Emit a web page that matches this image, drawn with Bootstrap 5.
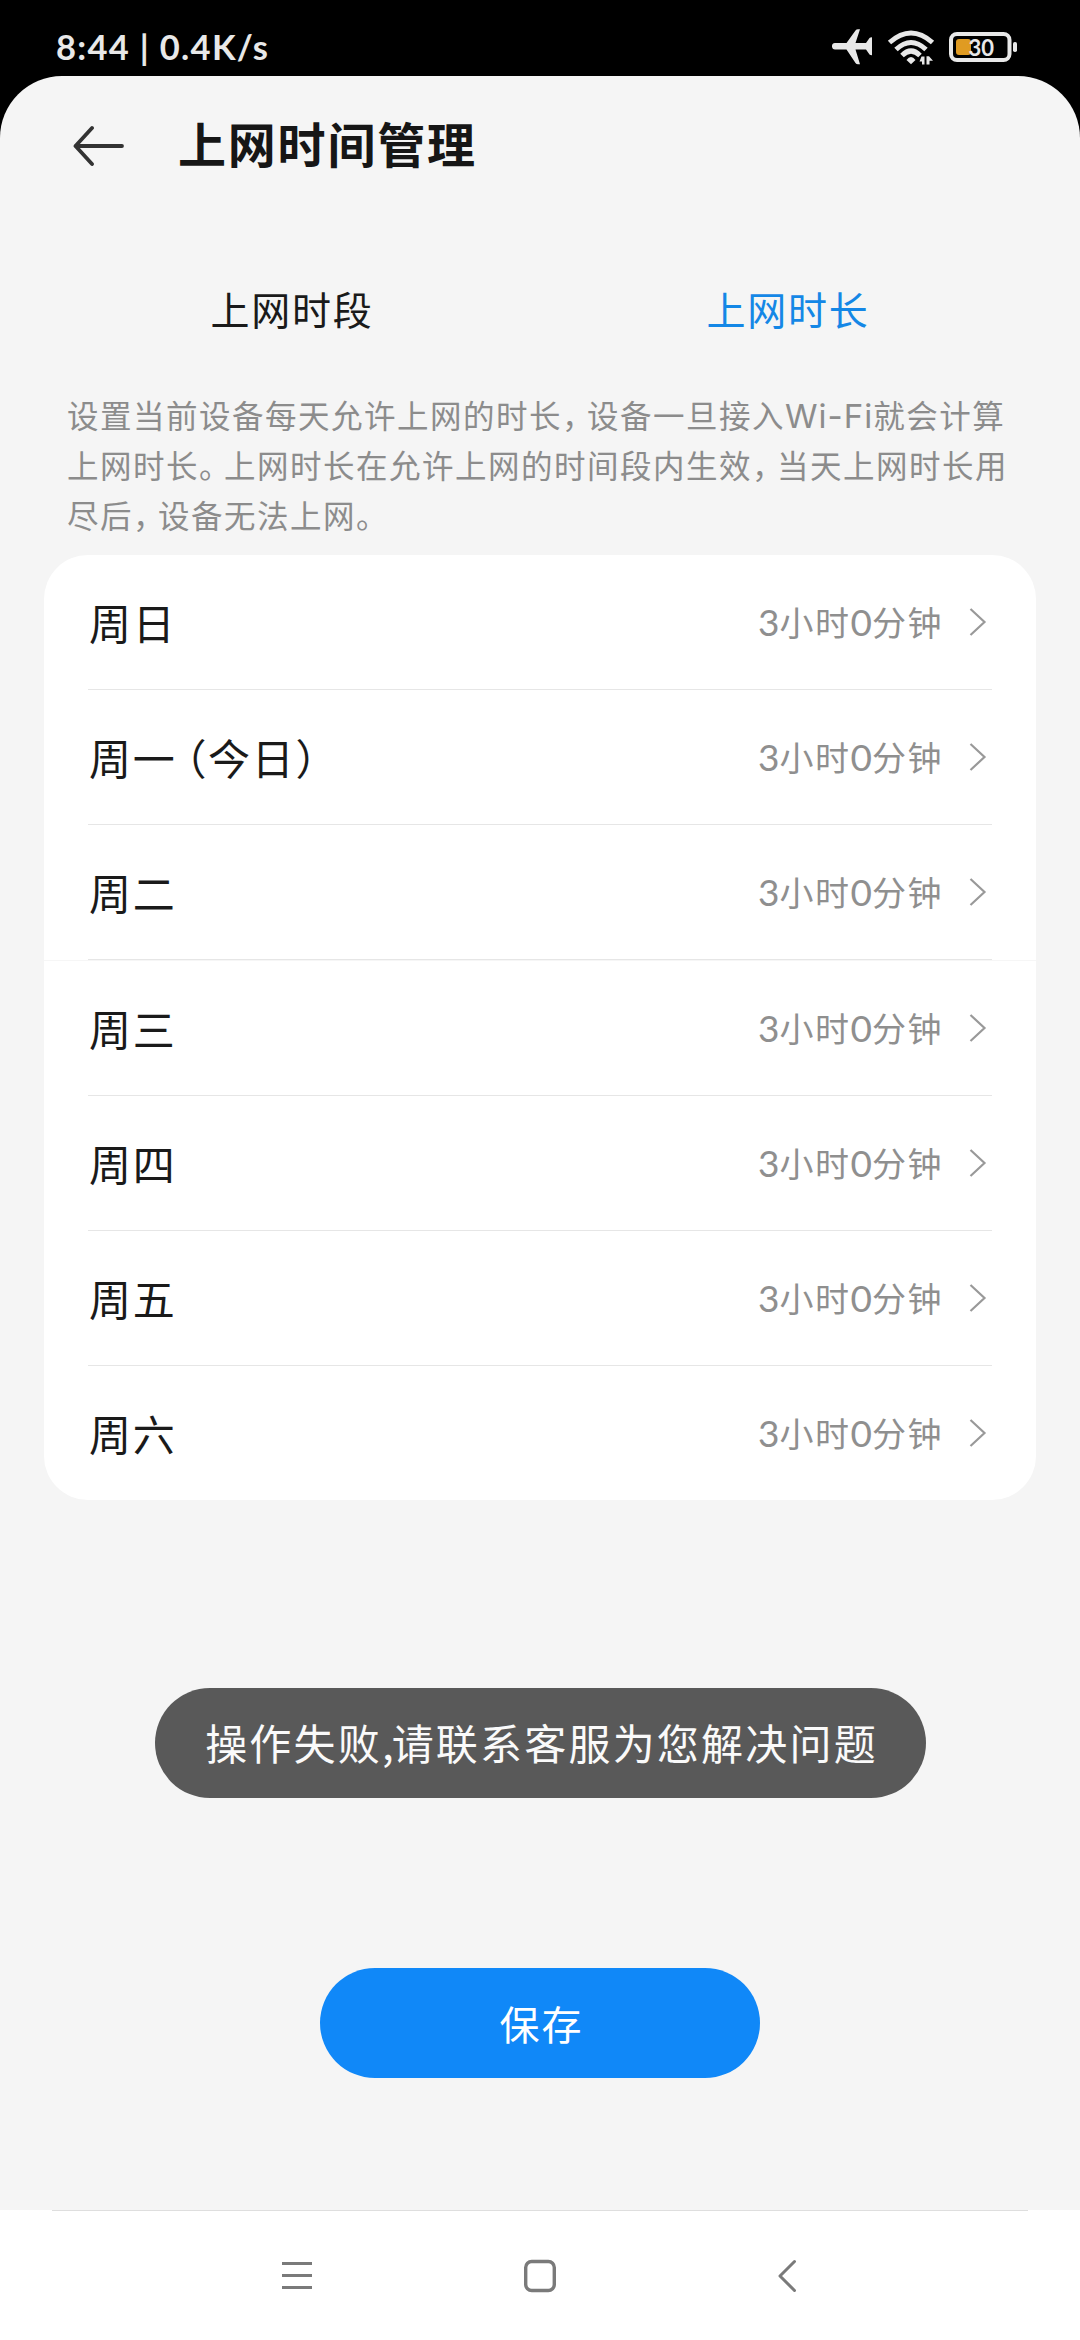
<!DOCTYPE html>
<html lang="zh-CN">
<head>
<meta charset="utf-8">
<meta name="viewport" content="width=device-width, initial-scale=1">
<title>上网时间管理</title>
<link href="https://cdn.jsdelivr.net/npm/bootstrap@5.3.0/dist/css/bootstrap.min.css" rel="stylesheet">
<style>
  body { font-family: "Noto Sans CJK SC", "Noto Sans", sans-serif; background: #000; color: #1a1a1a; line-height: 1; }
  svg { display: block; flex: none; }
  .screen { width: 1080px; height: 2340px; }
  .statusbar { height: 76px; padding: 18px 60px 0 56px; color: #e8e8e8; }
  .clock { font-family: Lato, sans-serif; font-weight: 700; font-size: 34.5px; line-height: 58px; letter-spacing: 1.3px; }
  .sheet { height: 2134px; background: #f5f5f5; border-radius: 62px 62px 0 0; }
  .topbar { height: 140px; padding-left: 73px; gap: 53px; }
  .page-title { font-size: 48px; font-weight: 700; letter-spacing: 1.8px; color: #161616; padding-bottom: 6px; }
  .tabs-row { height: 108px; margin: 40px 44px 0; }
  .tabs-row .nav-link { font-size: 39px; letter-spacing: 1.7px; color: #1a1a1a; line-height: 104px; }
  .tabs-row .nav-link.active { color: #1487e6; }
  .hint { margin: 25px 0 0 67px; height: 166px; font-size: 31.5px; line-height: 50px; letter-spacing: 1.5px; color: #8c8c8c; }
  .pn { letter-spacing: -6.5px; }
  .latin { font-family: Inter, sans-serif; font-size: 33px; letter-spacing: 1px; line-height: 1; }
  .days { margin: 0 44px; height: 945px; border-radius: 44px; background: #fff; }
  .day { height: 135px; margin: 0 44px; border-bottom: 1px solid #e6e6e6; }
  .day-last { height: 134px; border-bottom: 0; }
  .seam { height: 1px; background: #f6f6f6; }
  .day-name { font-size: 42px; letter-spacing: 1.7px; padding-left: 1px; }
  .pl { margin-left: 9px; font-feature-settings: "halt"; }
  .day-value { font-size: 34px; letter-spacing: 1.5px; color: #8f8f8f; margin-right: 26px; padding-bottom: 2px; }
  .num { font-family: Lato, sans-serif; font-size: 37px; letter-spacing: 0; }
  .day svg { margin-right: 5px; }
  .toast-pill { margin: 188px auto 0; width: 771px; height: 110px; background: #595959; color: #fafafa; font-size: 42px; letter-spacing: 2.2px; padding: 0 0 3px 3px; }
  .comma { letter-spacing: -2px; }
  .save-btn { margin: 170px auto 0; width: 440px; height: 110px; background: #1088f8; color: #fff; font-size: 40px; letter-spacing: 2px; line-height: 1; padding: 0 0 1px 3px; }
  .sysnav { height: 130px; background: #fff; }
  .hairline { height: 1px; margin: 0 52px; background: #dedede; }
  .keys { height: 129px; padding: 0 283px 0 282px; }
  .keys svg:nth-child(2) { margin-right: 10px; }
</style>
</head>
<body>
<div class="screen d-flex flex-column">
  <div class="statusbar d-flex justify-content-between">
    <div class="clock">8:44 | 0.4K/s</div>
    <svg width="190" height="50" viewBox="830 18 190 50" fill="#e8e8e8">
      <path d="M835 43H846.500L855.500 30.500Q856.300 29.300 858 29.300H860L855.500 43H866L869.500 38Q870 37.300 872 37.300V55.200Q870 55.200 869.500 54.500L866 49.500H855.500L860 64.300H858Q856.300 64.300 855.500 63L846.500 49.500H835.500A3.200 3.200 0 0 1 835 43Z"/>
      <g fill="none" stroke="#e8e8e8" stroke-width="5">
        <path d="M889.500 42.500Q911 23.500 932.500 42.500"/>
        <path d="M896 49.500Q911 35.500 926 49.500"/>
        <path d="M902 55.500Q911 46.500 920 55.500"/>
      </g>
      <path d="M906.500 60Q911 54 915.500 60L911 64.200Z"/>
      <path d="M921.500 56.500H924.500V64.500H922V61.500H919.500ZM926.500 56.200H929L933 60.800H929.500V64.500H926.500Z"/>
      <rect x="951" y="34" width="58.500" height="26" rx="6" fill="none" stroke="#e8e8e8" stroke-width="4"/>
      <rect x="956" y="39" width="15" height="16" rx="3" fill="#e09b22"/>
      <rect x="1013" y="42" width="4" height="10" rx="1.800"/>
      <text x="968.500" y="55.600" font-family="Lato, sans-serif" font-size="22" font-weight="700" textLength="25.500">30</text>
    </svg>
  </div>

  <main class="sheet d-flex flex-column">
    <header class="topbar d-flex align-items-center">
      <svg width="52" height="44" viewBox="0 0 52 44" fill="none" stroke="#333" stroke-width="3.800" stroke-linecap="round" stroke-linejoin="round">
        <path d="M49 22H2.500M19 4L2.500 22L19 40"/>
      </svg>
      <h1 class="page-title mb-0">上网时间管理</h1>
    </header>

    <nav class="tabs-row nav nav-fill row g-0">
      <a class="nav-link col-6 p-0 text-center">上网时段</a>
      <a class="nav-link active col-6 p-0 text-center">上网时长</a>
    </nav>

    <p class="hint text-nowrap">设置当前设备每天允许上网的时长<span class="pn">，</span>设备一旦接入<span class="latin">Wi-Fi</span>就会计算<br>上网时长<span class="pn">。</span>上网时长在允许上网的时间段内生效<span class="pn">，</span>当天上网时长用<br>尽后<span class="pn">，</span>设备无法上网。</p>

    <section class="days">
      <div class="day d-flex align-items-center"><span class="day-name me-auto">周日</span><span class="day-value"><span class="num">3</span>小时<span class="num">0</span>分钟</span><svg width="18" height="30" viewBox="0 0 18 30" fill="none" stroke="#999" stroke-width="2.200"><path d="M1.500 2L15.500 15L1.500 28"/></svg></div>
      <div class="day d-flex align-items-center"><span class="day-name me-auto">周一<span class="pl">（</span>今日）</span><span class="day-value"><span class="num">3</span>小时<span class="num">0</span>分钟</span><svg width="18" height="30" viewBox="0 0 18 30" fill="none" stroke="#999" stroke-width="2.200"><path d="M1.500 2L15.500 15L1.500 28"/></svg></div>
      <div class="day d-flex align-items-center"><span class="day-name me-auto">周二</span><span class="day-value"><span class="num">3</span>小时<span class="num">0</span>分钟</span><svg width="18" height="30" viewBox="0 0 18 30" fill="none" stroke="#999" stroke-width="2.200"><path d="M1.500 2L15.500 15L1.500 28"/></svg></div>
      <div class="seam"></div>
      <div class="day d-flex align-items-center"><span class="day-name me-auto">周三</span><span class="day-value"><span class="num">3</span>小时<span class="num">0</span>分钟</span><svg width="18" height="30" viewBox="0 0 18 30" fill="none" stroke="#999" stroke-width="2.200"><path d="M1.500 2L15.500 15L1.500 28"/></svg></div>
      <div class="day d-flex align-items-center"><span class="day-name me-auto">周四</span><span class="day-value"><span class="num">3</span>小时<span class="num">0</span>分钟</span><svg width="18" height="30" viewBox="0 0 18 30" fill="none" stroke="#999" stroke-width="2.200"><path d="M1.500 2L15.500 15L1.500 28"/></svg></div>
      <div class="day d-flex align-items-center"><span class="day-name me-auto">周五</span><span class="day-value"><span class="num">3</span>小时<span class="num">0</span>分钟</span><svg width="18" height="30" viewBox="0 0 18 30" fill="none" stroke="#999" stroke-width="2.200"><path d="M1.500 2L15.500 15L1.500 28"/></svg></div>
      <div class="day day-last d-flex align-items-center"><span class="day-name me-auto">周六</span><span class="day-value"><span class="num">3</span>小时<span class="num">0</span>分钟</span><svg width="18" height="30" viewBox="0 0 18 30" fill="none" stroke="#999" stroke-width="2.200"><path d="M1.500 2L15.500 15L1.500 28"/></svg></div>
    </section>

    <div class="toast-pill rounded-pill d-flex align-items-center justify-content-center text-nowrap" role="status"><span>操作失败<span class="comma">,</span>请联系客服为您解决问题</span></div>
    <button type="button" class="save-btn btn rounded-pill border-0 d-block">保存</button>
  </main>

  <footer class="sysnav">
    <div class="hairline"></div>
    <div class="keys d-flex justify-content-between align-items-center">
      <svg width="30" height="34" viewBox="0 0 30 34" stroke="#7a7a7a" stroke-width="3.200"><path d="M0 4.500H30M0 16.500H30M0 28.500H30"/></svg>
      <svg width="34" height="34" viewBox="0 0 34 34" fill="none" stroke="#7a7a7a" stroke-width="3.400"><rect x="2.700" y="2.500" width="28.600" height="29" rx="6"/></svg>
      <svg width="20" height="34" viewBox="0 0 20 34" fill="none" stroke="#7a7a7a" stroke-width="3" stroke-linecap="round" stroke-linejoin="round"><path d="M17.500 2.500L3 17L17.500 31.500"/></svg>
    </div>
  </footer>
</div>
<script src="https://cdn.jsdelivr.net/npm/bootstrap@5.3.0/dist/js/bootstrap.bundle.min.js"></script>
</body>
</html>
